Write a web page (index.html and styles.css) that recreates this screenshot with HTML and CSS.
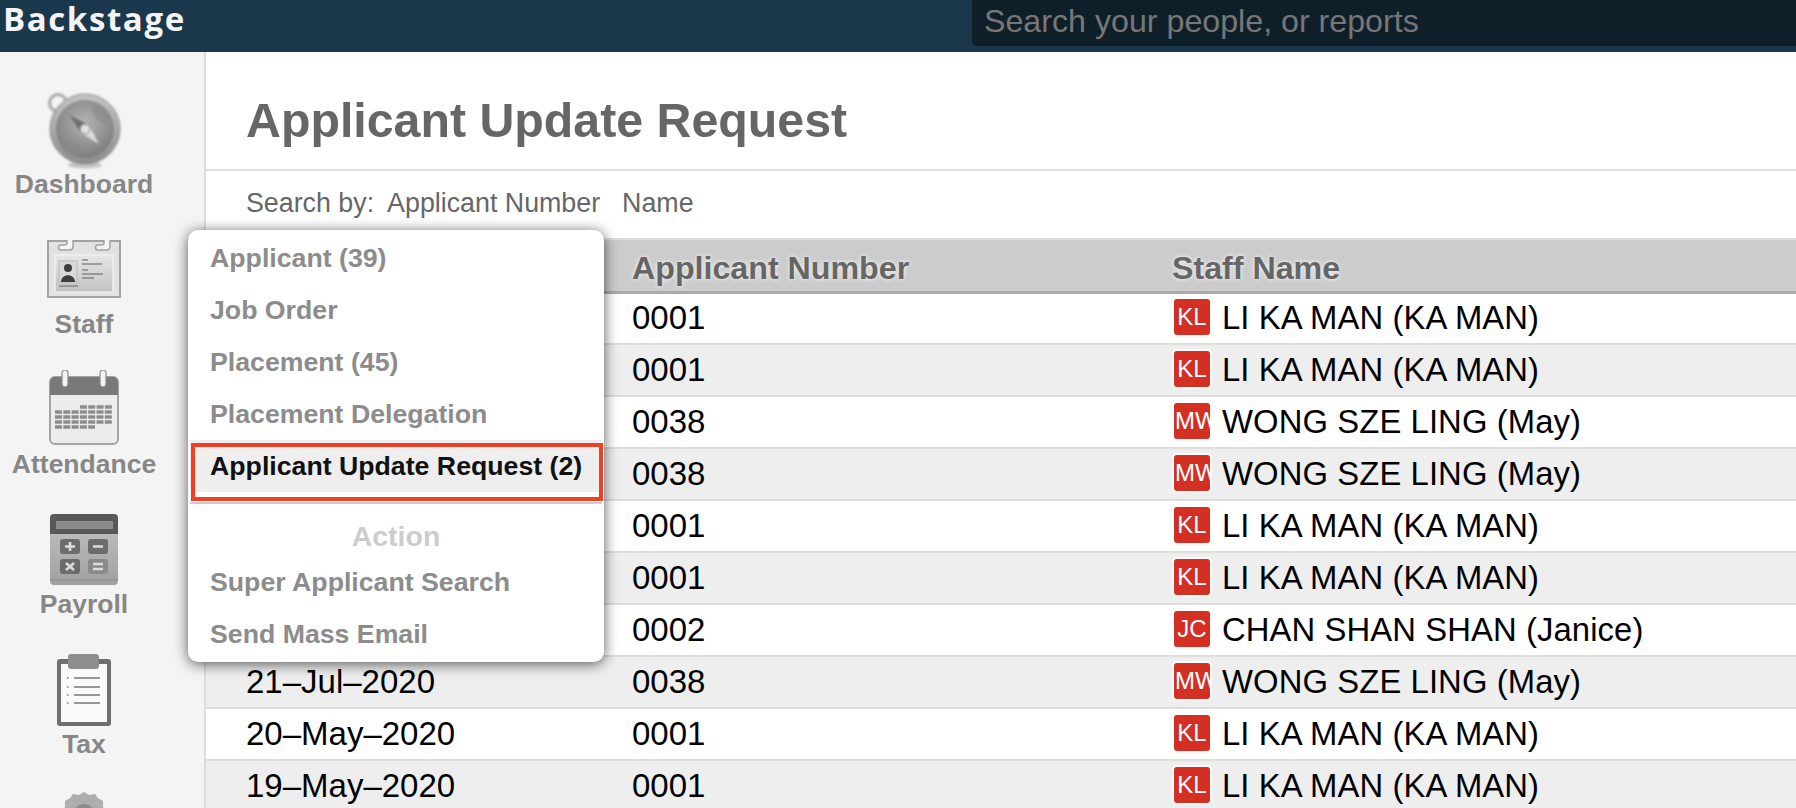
FILE: index.html
```html
<!DOCTYPE html>
<html lang="en">
<head>
<meta charset="utf-8">
<title>Applicant Update Request</title>
<link rel="stylesheet" href="styles.css">
</head>
<body>
<header class="topbar">
  <div class="logo">Backstage</div>
  <div class="search">Search your people, or reports</div>
</header>
<div class="body">
  <nav class="side">
    <a class="nav">
      <svg class="ico ico-dash" viewBox="0 0 74 77"><defs><radialGradient id="g1" cx=".5" cy=".4" r=".6"><stop offset="0" stop-color="#b4b4b4"/><stop offset="1" stop-color="#7d7d7d"/></radialGradient><linearGradient id="g2" x1="0" y1="0" x2="0" y2="1"><stop offset="0" stop-color="#c4c4c4"/><stop offset="1" stop-color="#8e8e8e"/></linearGradient></defs><ellipse cx="38" cy="73" rx="17" ry="3.500" fill="#c4c4c4"/><circle cx="11" cy="11" r="8.500" fill="none" stroke="#a8a8a8" stroke-width="3"/><circle cx="38" cy="37" r="35" fill="url(#g2)" stroke="#8a8a8a" stroke-width="1"/><circle cx="38" cy="37" r="29" fill="url(#g1)"/><path d="M12 52c8-6 18-4 22 4 2 6-4 10-10 8-6-2-10-6-12-12zM44 14c8-2 16 6 18 16-6 2-12-2-14-6z" fill="#8a8a8a" opacity=".6"/><path d="M22 23 L42 33 L52 52 L34 41Z" fill="#dcdcdc"/><path d="M22 23 L42 33 L34 41Z" fill="#6d6d6d"/><circle cx="38" cy="37" r="5" fill="#e2e2e2" stroke="#8a8a8a"/></svg>
      <span class="lbl">Dashboard</span>
    </a>
    <a class="nav">
      <svg class="ico ico-staff" viewBox="0 0 74 58"><defs><linearGradient id="g3" x1="0" y1="0" x2="0" y2="1"><stop offset="0" stop-color="#e6e6e6"/><stop offset="1" stop-color="#c2c2c2"/></linearGradient></defs><rect x="1" y="1" width="72" height="56" fill="#e2e2e2" stroke="#a2a2a2" stroke-width="2"/><path d="M20 -1V3Q20 5 17 5H14a2.500 2.500 0 0 0 0 5H23Q26 10 26 6V-1Z" fill="#f4f4f4" stroke="#a2a2a2" stroke-width="1.500"/><path d="M57 -1V3Q57 5 54 5H51a2.500 2.500 0 0 0 0 5H60Q63 10 63 6V-1Z" fill="#f4f4f4" stroke="#a2a2a2" stroke-width="1.500"/><rect x="8" y="15" width="58" height="37" fill="url(#g3)" stroke="#efefef" stroke-width="1.500"/><rect x="12" y="21" width="18" height="21" fill="#d8d8d8" stroke="#bcbcbc"/><circle cx="21" cy="28" r="4" fill="#3e3e3e"/><path d="M14 42c0-9 14-9 14 0z" fill="#3e3e3e"/><path d="M12 46h19M35 20h6M35 24h20M35 30h6M35 34h21M35 38h12" stroke="#858585" stroke-width="1.500" fill="none"/></svg>
      <span class="lbl">Staff</span>
    </a>
    <a class="nav">
      <svg class="ico ico-att" viewBox="0 0 70 77"><rect x="1" y="7" width="68" height="67" rx="5" fill="#ececec" stroke="#a4a4a4" stroke-width="2"/><path d="M1 25v-13a5 5 0 0 1 5-5h58a5 5 0 0 1 5 5v13z" fill="#797979"/><rect x="13" y="0" width="6" height="17" rx="3" fill="#f4f4f4" stroke="#8a8a8a" stroke-width="1.200"/><rect x="51" y="0" width="6" height="17" rx="3" fill="#f4f4f4" stroke="#8a8a8a" stroke-width="1.200"/><path d="M6 42h58M6 47h58M6 52h58M6 57h40M31 37h33" stroke="#8c8c8c" stroke-width="3.400" stroke-dasharray="7 1.300" fill="none"/></svg>
      <span class="lbl">Attendance</span>
    </a>
    <a class="nav">
      <svg class="ico ico-pay" viewBox="0 0 70 72"><defs><linearGradient id="g4" x1="0" y1="0" x2="0" y2="1"><stop offset="0" stop-color="#c4c4c4"/><stop offset="1" stop-color="#a0a0a0"/></linearGradient></defs><rect x="1" y="0" width="68" height="71" rx="4" fill="url(#g4)"/><path d="M1 20v-16a4 4 0 0 1 4-4h60a4 4 0 0 1 4 4v16z" fill="#585858"/><rect x="7" y="7" width="57" height="8" fill="#8c8c8c"/><rect x="11" y="25" width="20" height="15" rx="3" fill="#6c6c6c"/><rect x="39" y="25" width="20" height="15" rx="3" fill="#6c6c6c"/><rect x="11" y="45" width="20" height="15" rx="3" fill="#6c6c6c"/><rect x="39" y="45" width="20" height="15" rx="3" fill="#8a8a8a"/><path d="M16 32.500h10M21 28v9M44 32.500h10M17 49l8 7M25 49l-8 7M44 50h10M44 55h10" stroke="#dcdcdc" stroke-width="2.600" fill="none"/><path d="M1 66h68" stroke="#8e8e8e" stroke-width="1"/></svg>
      <span class="lbl">Payroll</span>
    </a>
    <a class="nav">
      <svg class="ico ico-tax" viewBox="0 0 56 72"><rect x="1" y="5" width="54" height="67" rx="3" fill="#6f6f6f"/><rect x="5" y="10" width="46" height="58" fill="#fafafa"/><rect x="12" y="0" width="31" height="15" rx="3" fill="#8e8e8e"/><path d="M11 24h1.500M11 33h1.500M11 41h1.500M11 49h1.500M18 24h26M18 33h26M18 41h26M18 49h26" stroke="#777" stroke-width="1.400" fill="none"/></svg>
      <span class="lbl">Tax</span>
    </a>
    <a class="nav nav-more">
      <svg class="ico ico-more" viewBox="0 0 46 46"><path d="M23 0l5 3 6-1 3 4 5 3v6l3 5-2 5 2 5-3 5v6l-5 3-3 4-6-1-5 3-5-3-6 1-3-4-5-3v-6l-3-5 2-5-2-5 3-5v-6l5-3 3-4 6 1z" fill="#aeaeae"/><circle cx="23" cy="23" r="11" fill="#8c8c8c"/></svg>
    </a>
  </nav>
  <main class="main">
    <h1 class="title">Applicant Update Request</h1>
    <div class="filters"><span class="f-label">Search by:</span><span>Applicant Number</span><span>Name</span></div>
    <table class="grid">
      <thead>
        <tr><th class="c-date"></th><th class="c-num">Applicant Number</th><th class="c-name">Staff Name</th></tr>
      </thead>
      <tbody>
        <tr><td></td><td>0001</td><td><div class="who"><i class="badge">KL</i>LI KA MAN (KA MAN)</div></td></tr>
        <tr><td></td><td>0001</td><td><div class="who"><i class="badge">KL</i>LI KA MAN (KA MAN)</div></td></tr>
        <tr><td></td><td>0038</td><td><div class="who"><i class="badge badge-wide">MW</i>WONG SZE LING (May)</div></td></tr>
        <tr><td></td><td>0038</td><td><div class="who"><i class="badge badge-wide">MW</i>WONG SZE LING (May)</div></td></tr>
        <tr><td></td><td>0001</td><td><div class="who"><i class="badge">KL</i>LI KA MAN (KA MAN)</div></td></tr>
        <tr><td></td><td>0001</td><td><div class="who"><i class="badge">KL</i>LI KA MAN (KA MAN)</div></td></tr>
        <tr><td></td><td>0002</td><td><div class="who"><i class="badge">JC</i>CHAN SHAN SHAN (Janice)</div></td></tr>
        <tr><td>21–Jul–2020</td><td>0038</td><td><div class="who"><i class="badge badge-wide">MW</i>WONG SZE LING (May)</div></td></tr>
        <tr><td>20–May–2020</td><td>0001</td><td><div class="who"><i class="badge">KL</i>LI KA MAN (KA MAN)</div></td></tr>
        <tr><td>19–May–2020</td><td>0001</td><td><div class="who"><i class="badge">KL</i>LI KA MAN (KA MAN)</div></td></tr>
      </tbody>
    </table>
  </main>
</div>
<div class="menu">
  <a class="mi">Applicant (39)</a>
  <a class="mi">Job Order</a>
  <a class="mi">Placement (45)</a>
  <a class="mi">Placement Delegation</a>
  <a class="mi mi-on">Applicant Update Request (2)</a>
  <div class="msep"></div>
  <div class="mhead">Action</div>
  <a class="mi">Super Applicant Search</a>
  <a class="mi">Send Mass Email</a>
</div>
</body>
</html>
```
FILE: styles.css
```css
* { box-sizing: border-box; }
html, body { margin: 0; height: 808px; overflow: hidden; background: #fff; font-family: "Liberation Sans", Arial, sans-serif; }
body { position: relative; }
.topbar { height: 52px; background: #1a374b; display: flex; justify-content: space-between; align-items: flex-start; }
.logo { font-family: "Open Sans", sans-serif; font-weight: 700; font-size: 33px; line-height: 38px; letter-spacing: 1.600px; color: #f4f4f4; padding-left: 3px; }
.search { width: 824px; height: 46px; background: #0f1f2a; border-bottom-left-radius: 5px; color: #777; font-size: 32.200px; line-height: 43px; padding-left: 12px; }
.body { display: flex; height: 756px; }
.side { width: 206px; flex: none; background: #f4f4f4; border-right: 2px solid #ddd; padding-top: 7px; display: flex; flex-direction: column; overflow: hidden; }
.nav { display: flex; flex-direction: column; align-items: center; justify-content: flex-end; height: 140px; flex: none; width: 100%; padding-right: 36px; color: #878787; font-weight: 700; font-size: 26.500px; line-height: 30px; }
.nav-more { justify-content: flex-start; padding-top: 33px; }
.ico { display: block; flex: none; filter: blur(.5px); }
.ico-dash { width: 74px; height: 77px; filter: blur(.8px); }
.ico-staff { width: 74px; height: 58px; margin-bottom: 11px; }
.ico-att { width: 70px; height: 77px; margin-bottom: 2px; }
.ico-pay { width: 70px; height: 72px; margin-bottom: 3px; }
.ico-tax { width: 56px; height: 72px; margin-bottom: 3px; }
.ico-more { width: 46px; height: 46px; }
.main { flex: 1; min-width: 0; }
.title { margin: 0; height: 119px; padding: 43px 0 0 40px; font-size: 48.300px; line-height: 50px; color: #666; font-weight: 700; border-bottom: 2px solid #ddd; }
.filters { height: 67px; display: flex; gap: 22px; padding: 17px 0 0 40px; font-size: 26.800px; line-height: 30px; color: #666; }
.f-label { margin-right: -9px; }
.grid { width: 100%; border-collapse: collapse; table-layout: fixed; }
.grid th { height: 53px; background: #ccc; border-top: 2px solid #ddd; border-bottom: 3px solid #aaa; text-align: left; font-size: 32.200px; font-weight: 700; color: #666; padding: 6px 0 0; text-shadow: 0 0 4px #fff; }
.grid th.c-date { width: 426px; }
.grid th.c-num { width: 540px; }
.grid td { height: 52px; padding: 0; border-bottom: 2px solid #ddd; font-size: 33px; color: #000; }
.grid td:first-child { padding-left: 40px; }
.grid tbody tr:nth-child(even) { background: #eee; }
.who { display: flex; align-items: center; font-size: 32.800px; letter-spacing: .1px; }
.badge { width: 36px; height: 36px; flex: none; background: #d32f23; color: #fff; border-radius: 3px; font-style: normal; font-size: 24px; letter-spacing: 0; line-height: 35px; text-align: center; margin: -2px 12px 0 2px; overflow: hidden; box-shadow: 0 0 0 2px #fff; }
.badge-wide { text-align: left; white-space: nowrap; padding-left: 1px; }
.menu { position: absolute; left: 188px; top: 230px; width: 416px; height: 432px; background: #fff; border-radius: 10px; box-shadow: 0 2px 14px rgba(0,0,0,.65); padding: 2px 2px 0; display: flex; flex-direction: column; color: #8c8c8c; font-weight: 700; font-size: 26.700px; }
.mi { display: block; height: 52px; line-height: 52px; padding-left: 20px; flex: none; }
.mi-on { color: #111; background: #eee; position: relative; }
.mi-on::after { content: ""; position: absolute; left: 1px; right: -1px; top: 3px; bottom: -9px; border: 4px solid #ee4023; }
.msep { height: 2px; margin-top: 10px; background: #ccc; flex: none; }
.mhead { height: 52px; line-height: 64px; text-align: center; color: #ccc; font-size: 28.500px; flex: none; }
```
